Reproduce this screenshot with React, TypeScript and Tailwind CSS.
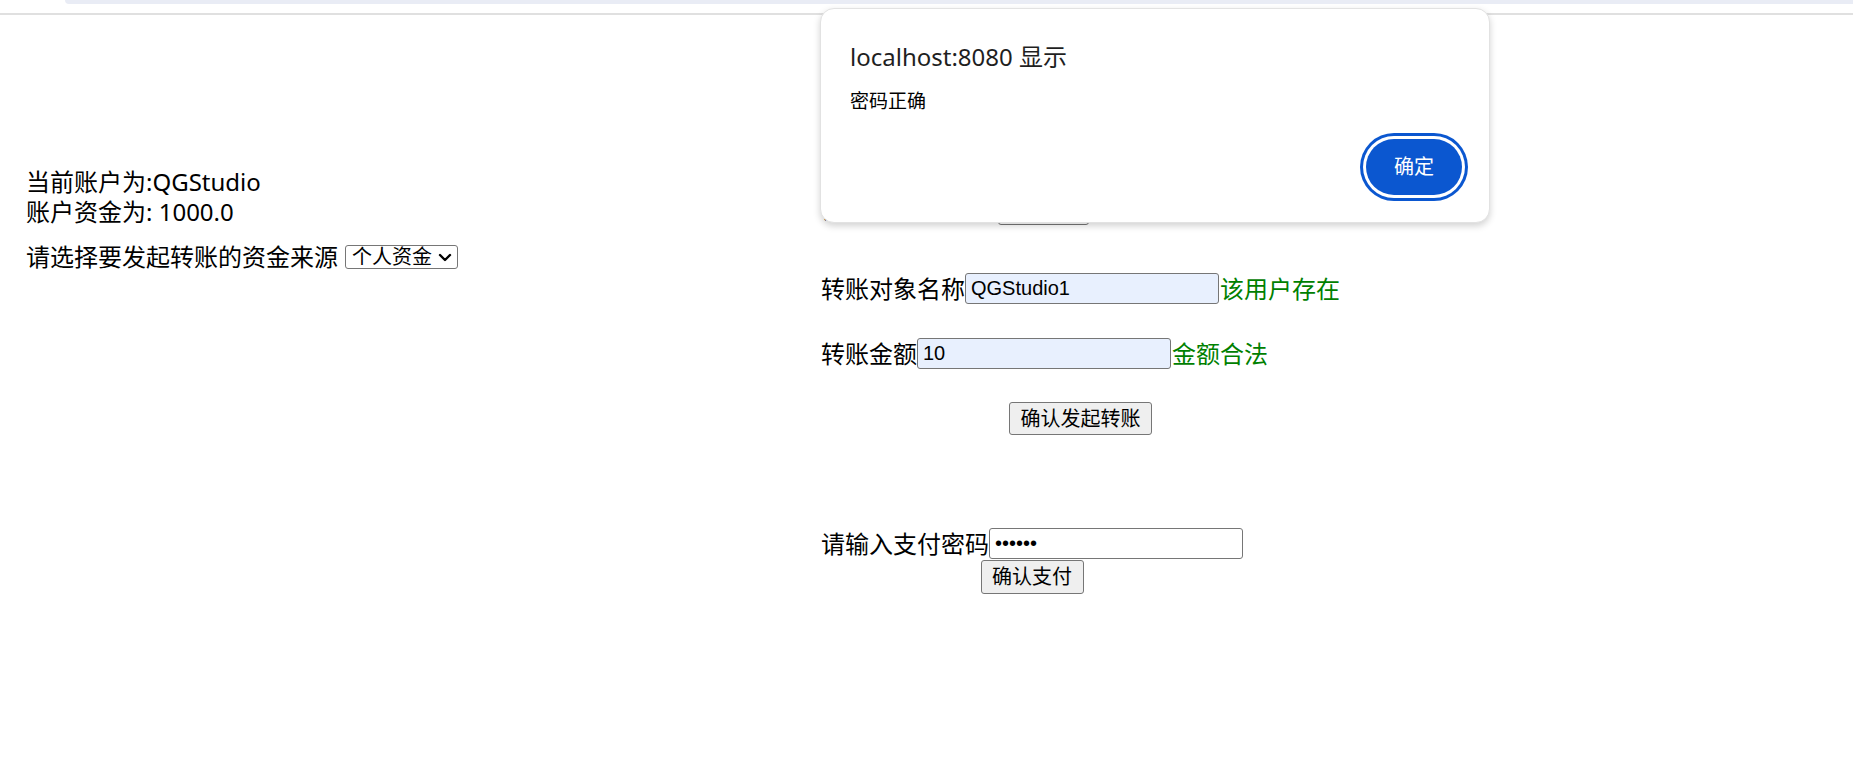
import React from 'react';

// Font stacks: page text (YaHei-like) and form control text (Arial-like)
const cjk = "font-['Noto_Sans','Noto_Sans_CJK_SC',sans-serif]";
const ctl = "font-['Liberation_Sans','Noto_Sans_CJK_SC',sans-serif]";

const inputClass =
  'h-[31px] w-[254px] rounded-[3px] border border-[#767676] px-[5px] text-[20px] text-black outline-none ' + ctl;

const buttonClass =
  'flex items-center justify-center rounded-[3px] border border-[#767676] bg-[#efefef] text-[20px] text-black ' + cjk;

const ChevronDown: React.FC = () => (
  <svg width="14" height="9" viewBox="0 0 14 9" fill="none" className="pointer-events-none shrink-0">
    <path d="M2 2l5 5 5-5" stroke="#000" strokeWidth="2.4" strokeLinecap="round" strokeLinejoin="round" />
  </svg>
);

// Browser alert box that sits over the page
const AlertDialog: React.FC = () => (
  <div className="absolute left-[820px] top-[8px] z-10 flex h-[215px] w-[670px] flex-col rounded-[14px] border border-[#e2e2e2] bg-white pl-[29px] pr-[27px] pt-[32px] shadow-[0_3px_7px_rgba(0,0,0,0.18)]">
    <div className={"text-[24px] leading-[32px] text-[#1f1f1f] " + cjk}>localhost:8080 显示</div>
    <div className={"mt-[15px] text-[19px] leading-[26px] text-black " + cjk}>密码正确</div>
    <div className="mt-[25px] flex justify-end">
      <button
        className={
          "flex h-[56px] w-[96px] items-center justify-center rounded-full bg-[#0b57d0] text-[20px] text-white shadow-[0_0_0_3px_#ffffff,0_0_0_6px_#0b57d0] " +
          cjk
        }
      >
        确定
      </button>
    </div>
  </div>
);

const App: React.FC = () => {
  return (
    <div className="relative min-h-screen w-full overflow-hidden bg-white">
      {/* browser toolbar edge */}
      <div className="ml-[65px] h-[4px] rounded-bl-[5px] bg-[#e9ecf5]" />
      <div className="h-[9px]" />
      <div className="h-[2px] bg-[#e0e0e0]" />

      <div className="flex">
        {/* account info */}
        <div className={"w-[821px] shrink-0 pl-[26px] pt-[152px] text-[24px] text-black " + cjk}>
          <div className="leading-[30px]">当前账户为:QGStudio</div>
          <div className="leading-[30px]">账户资金为: 1000.0</div>
          <div className="mt-[15px] flex h-[30px] items-center gap-[7px]">
            <span className="leading-[30px]">请选择要发起转账的资金来源</span>
            <div className="flex h-[24px] w-[113px] items-center rounded-[3px] border border-[#767676] bg-white pl-[6px] pr-[5px]">
              <select
                defaultValue="personal"
                className={
                  "h-[22px] min-w-0 flex-1 appearance-none border-0 bg-transparent p-0 text-[20px] leading-[22px] text-black outline-none " +
                  cjk
                }
              >
                <option value="personal">个人资金</option>
                <option value="group">小组资金</option>
              </select>
              <ChevronDown />
            </div>
          </div>
        </div>

        {/* transfer form */}
        <div className={"flex flex-col pt-[179px] text-[24px] text-black " + cjk}>
          <div className="flex w-fit flex-col items-center">
            <div className="flex h-[31px] items-center self-start">
              <span className="w-[177px] leading-[31px]">请选择转账方式</span>
              <div className="h-[24px] w-[91px] self-end rounded-[3px] border border-[#767676] bg-white" />
            </div>

            <div className="mt-[48px] flex h-[31px] items-center self-start">
              <span className="leading-[31px]">转账对象名称</span>
              <input className={inputClass + ' bg-[#e8f0fe]'} defaultValue="QGStudio1" />
              <span className="ml-[1px] leading-[31px] text-[#008000]">该用户存在</span>
            </div>

            <div className="mt-[34px] flex h-[31px] items-center self-start">
              <span className="leading-[31px]">转账金额</span>
              <input className={inputClass + ' bg-[#e8f0fe]'} defaultValue="10" />
              <span className="ml-[1px] leading-[31px] text-[#008000]">金额合法</span>
            </div>

            <button className={buttonClass + ' mt-[33px] h-[33px] w-[143px]'}>确认发起转账</button>
          </div>

          <div className="mt-[93px] flex w-fit flex-col items-center">
            <div className="flex h-[31px] items-center">
              <span className="leading-[31px]">请输入支付密码</span>
              <input type="password" className={inputClass + ' bg-white'} defaultValue="123456" />
            </div>
            <button className={buttonClass + ' mt-[1px] h-[34px] w-[103px]'}>确认支付</button>
          </div>
        </div>
      </div>

      <AlertDialog />
    </div>
  );
};

export default App;
